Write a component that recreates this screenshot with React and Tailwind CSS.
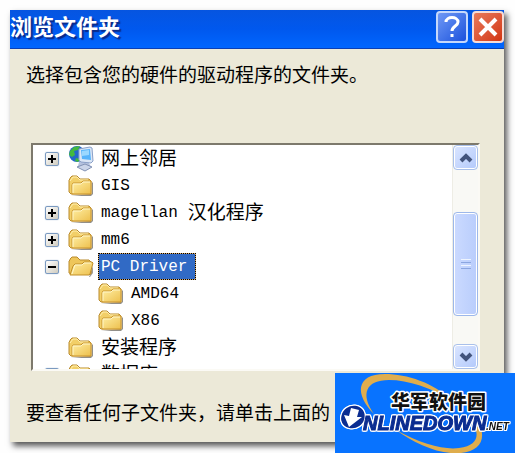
import React from 'react';

const rows = [
  { id: 'net', cjk: '网上邻居', icon: 'network', toggle: 'plus' },
  { id: 'gis', latin: 'GIS' },
  { id: 'magellan', latin: 'magellan', cjk: '汉化程序', toggle: 'plus' },
  { id: 'mm6', latin: 'mm6', toggle: 'plus' },
  { id: 'driver', latin: 'PC Driver', toggle: 'minus', icon: 'open', selected: true },
  { id: 'amd', latin: 'AMD64', child: true },
  { id: 'x86', latin: 'X86', child: true },
  { id: 'setup', cjk: '安装程序' },
  { id: 'db', cjk: '数据库', toggle: 'plus' },
];

const FolderIcon = () => (
  <svg width="26" height="22" viewBox="0 0 26 22" className="shrink-0">
    <path d="M3 21h20l2-2V8l-1-1v12z" fill="#77736b" opacity=".8" />
    <path d="M1 17V5l1-1V3l2-2h5l3 3h9l2 2v13H3z" fill="#f2cf68" stroke="#b98a2c" />
    <path d="M2 6l3-4h4l3 3h8" fill="none" stroke="#fff0b0" />
    <path d="M4 19V10l1-2h8l2-2h8v13z" fill="url(#folder)" stroke="#c9952f" />
    <path d="M5 18V9h8l2-2h7" fill="none" stroke="#fff6c8" />
  </svg>
);

const OpenFolderIcon = () => (
  <svg width="26" height="22" viewBox="0 0 26 22" className="shrink-0">
    <path d="M3 21h18l4-11v7l-3 4H5z" fill="#77736b" opacity=".7" />
    <path d="M1 17V5l1-1V3l2-2h5l3 3h9l2 2v12H3z" fill="#eec65a" stroke="#b98a2c" />
    <path d="M2 19l3-9 2-2h7l2-2h8l1 1-3 11-1 1H3z" fill="url(#folder)" stroke="#c18f28" />
    <path d="M4 18l3-9h7l2-2h7" fill="none" stroke="#fff6c8" />
  </svg>
);

const NetworkIcon = () => (
  <svg width="26" height="26" viewBox="0 0 26 26" className="shrink-0">
    <circle cx="9" cy="8" r="8" fill="#2468c8" />
    <path d="M2 5l4-4 6-1-2 4-4 1 1 4-3 2-3-2zM8 12l4 1-2 3-3-1z" fill="#43b93d" />
    <path d="M11 16l9-1 3 6-8 3-5-4z" fill="#b5c2de" />
    <path d="M9 21l8-3 7 3-7 4z" fill="#cbd5e9" stroke="#8292b4" />
    <path d="M11 3l11-2 2 1 1 13-2 2-10-1-2-2z" fill="#dbe6f5" stroke="#8aa0c8" />
    <path d="M13 4l9-1 1 11-9-1z" fill="#58b4fb" />
    <path d="M14 5l7-1v5l-7 1z" fill="#9bd8ff" />
  </svg>
);

const Toggle = ({ type }) => (
  <button type="button" aria-label={type === 'plus' ? '展开' : '折叠'} className="flex size-3.5 items-center justify-center rounded-xs border border-[#7b9ac0] bg-linear-to-br from-white to-[#d0ccbf] shadow-[0_0_1px_#7b9ac0]">
    <svg width="8" height="8" viewBox="0 0 8 8" stroke="#000" strokeWidth="2">
      <path d={type === 'plus' ? 'M0 4h8M4 0v8' : 'M0 4h8'} />
    </svg>
  </button>
);

const TreeRow = ({ row }) => (
  <li role="treeitem" aria-selected={!!row.selected} className={`flex h-[27px] items-center ${row.child ? 'pl-[65px]' : 'pl-3'}`}>
    {!row.child && (
      <span className="mr-[9px] w-3.5 shrink-0">{row.toggle && <Toggle type={row.toggle} />}</span>
    )}
    {row.icon === 'network' ? <NetworkIcon /> : row.icon === 'open' ? <OpenFolderIcon /> : <FolderIcon />}
    <span className={`ml-1 flex h-[27px] items-center gap-2.5 whitespace-nowrap border pr-2 pl-0.5 ${row.selected ? 'border-[#d9a866] bg-[#316ac5] text-white outline-1 -outline-offset-1 outline-dotted outline-black' : 'border-transparent text-black'}`}>
      {row.latin && <span className="font-['Liberation_Mono',monospace] text-base leading-6">{row.latin}</span>}
      {row.cjk && <span className="pb-1 text-[19px] leading-6">{row.cjk}</span>}
    </span>
  </li>
);

const ScrollButton = ({ label, d }) => (
  <button type="button" aria-label={label} className="flex h-[25px] shrink-0 items-center justify-center rounded border border-[#a9c0ea] bg-linear-to-br from-[#dbe6ff] to-[#b3c9fb] shadow-[inset_0_0_0_1px_white]">
    <svg width="14" height="10" viewBox="0 0 14 10" fill="none" stroke="#43547c" strokeWidth="4">
      <path d={d} />
    </svg>
  </button>
);

const Logo = () => (
  <svg width="180" height="80" viewBox="0 0 180 80" className="absolute right-0 bottom-0 bg-[#0873ff]">
    <path d="M39 41C20 22 20 1 50 1c22 0 49 9 66 26C97 15 73 7 54 7 31 7 25 21 39 41z" fill="#dfad4d" />
    <path d="M61 57c25 14 48 20 63 18 17-2 20-11 16-20l5-3c6 16-1 26-19 28-21 2-46-9-65-23z" fill="#dfad4d" />
    <text x="56" y="36" fill="#111" stroke="#fff" strokeWidth="3" strokeLinejoin="round" paintOrder="stroke" fontSize="19" fontWeight="900" fontFamily="Noto Sans CJK SC, sans-serif">华军软件园</text>
    <g fontFamily="Liberation Sans, sans-serif" fontWeight="bold" fontStyle="italic" className="[filter:drop-shadow(1px_0_0_white)_drop-shadow(-1px_0_0_white)_drop-shadow(0_1px_0_white)_drop-shadow(0_-1px_0_white)]">
      <text x="5" y="54" fontSize="28" fill="#0b2d91">O</text>
      <ellipse cx="18" cy="44" rx="12" ry="11" fill="#0b2d91" transform="rotate(-35 18 44)" />
      <text x="28" y="57" fontSize="20" fill="#0b2d91" stroke="#0b2d91">NLINEDOWN</text>
      <text x="151" y="57" fontSize="10" fill="#111">.NET</text>
    </g>
    <path d="M16 35l8 2-2 7h5L14 54l-5-12 5 1z" fill="#fff" />
  </svg>
);

const App = () => {
  return (
    <div className="relative bg-[#fefefe] pt-2.5 pr-[11px] pb-[11px] pl-2.5 font-['Noto_Sans_CJK_SC',sans-serif]">
      <svg width="0" height="0" className="absolute">
        <defs>
          <linearGradient id="folder" x1="0" y1="0" x2="1" y2="1">
            <stop offset="0" stopColor="#fff0a6" />
            <stop offset="1" stopColor="#edbf4c" />
          </linearGradient>
        </defs>
      </svg>

      <section className="bg-[#ece9d8] shadow-[3px_4px_6px_#555]">
        <header className="flex h-[39px] items-center gap-1 border-b border-[#0a3fb5] bg-linear-to-b from-[#0655e0] via-[#0058ee] to-[#0066ff] pb-1">
          <h1 className="flex-1 pb-1 text-[22px] leading-7 font-bold text-white [text-shadow:2px_2px_1px_#0a2a8a]">浏览文件夹</h1>
          <button type="button" aria-label="帮助" className="flex size-8 items-center justify-center rounded border-2 border-[#c5d8fb] bg-linear-to-br from-[#6f98f5] to-[#1c50dc]">
            <svg width="18" height="22" viewBox="0 0 18 22" fill="none" stroke="#fff" strokeWidth="3">
              <path d="M3 6c0-6 12-6 12 0 0 4-6 4-6 9M9 18v3" />
            </svg>
          </button>
          <button type="button" aria-label="关闭" className="flex size-8 items-center justify-center rounded border-2 border-[#f6dcd6] bg-linear-to-br from-[#e8795a] to-[#d2330c]">
            <svg width="20" height="20" viewBox="0 0 20 20" stroke="#fff" strokeWidth="4">
              <path d="M2 2l16 16M18 2L2 18" />
            </svg>
          </button>
        </header>

        <div className="px-4 pb-4 text-[19px] leading-7 text-black">
          <p className="pt-[11px]">选择包含您的硬件的驱动程序的文件夹。</p>

          <div className="mt-[55px] mr-2 ml-[5px] flex h-[228px] overflow-hidden border-2 border-t-[#7d796c] border-r-[#fbfaf5] border-b-[#fbfaf5] border-l-[#7d796c] bg-white">
            <ul role="tree" className="flex-1">
              {rows.map((row) => <TreeRow key={row.id} row={row} />)}
            </ul>
            <div className="flex w-[26px] flex-col border-l border-[#eeede5] bg-[#f9f9f5]">
              <ScrollButton label="向上" d="M2 8l5-5 5 5" />
              <div className="h-[42px]" />
              <div className="flex h-[104px] flex-col items-center justify-center gap-0.5 rounded border border-[#9db8ea] bg-linear-to-r from-[#cbdaff] to-[#b9cdfc] shadow-[inset_0_0_0_1px_white]">
                <i className="h-px w-2.5 bg-[#eef4fe]" />
                <i className="h-px w-2.5 bg-[#8ba6e0]" />
                <i className="h-px w-2.5 bg-[#eef4fe]" />
                <i className="h-px w-2.5 bg-[#8ba6e0]" />
              </div>
              <div className="flex-1" />
              <ScrollButton label="向下" d="M2 2l5 5 5-5" />
            </div>
          </div>

          <p className="mt-[27px] whitespace-nowrap">要查看任何子文件夹，请单击上面的</p>
        </div>
      </section>

      <Logo />
    </div>
  );
};

export default App;
